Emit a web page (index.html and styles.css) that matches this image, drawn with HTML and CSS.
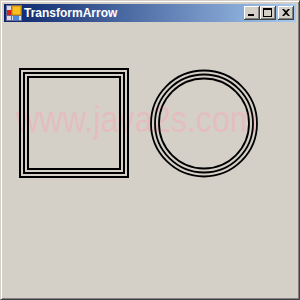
FILE: index.html
```html
<!DOCTYPE html>
<html lang="en">
<head>
    <meta charset="UTF-8"/>
    <title>TransformArrow</title>
    <link rel="stylesheet" href="styles.css">
</head>
<body>
<div class="window">
    <div class="titlebar">
        <svg class="app-icon" width="16" height="16" viewBox="0 0 16 16">
            <rect x="0.5" y="0.5" width="15" height="15" fill="#d8d8e8" stroke="#6b6b9a"/>
            <line x1="5.5" y1="0" x2="5.5" y2="16" stroke="#6b6b9a"/>
            <line x1="0" y1="10.5" x2="16" y2="10.5" stroke="#6b6b9a"/>
            <rect x="1" y="5" width="4" height="5" fill="#d02020"/>
            <rect x="6" y="1" width="9" height="9" fill="#f8c020" stroke="#c08000"/>
            <rect x="7" y="11" width="6" height="4" fill="#4a8ae0"/>
        </svg>
        <span class="title">TransformArrow</span>
        <div class="controls">
            <button class="ctl">
                <svg width="8" height="7" viewBox="0 0 8 7"><rect x="0" y="5" width="6" height="2" fill="#000"/></svg>
            </button>
            <button class="ctl">
                <svg width="9" height="9" viewBox="0 0 9 9"><rect x="0.5" y="0.5" width="8" height="8" fill="none" stroke="#000"/><rect x="0" y="0" width="9" height="2" fill="#000"/></svg>
            </button>
            <button class="ctl close">
                <svg width="8" height="7" viewBox="0 0 8 7"><path d="M0 0h2l2 2 2-2h2l-3 3.5 3 3.5h-2l-2-2-2 2h-2l3-3.5z" fill="#000"/></svg>
            </button>
        </div>
    </div>
    <div class="client">
        <svg class="canvas" width="292" height="273" viewBox="4 23 292 273">
            <text class="watermark" x="16" y="132" textLength="241" lengthAdjust="spacingAndGlyphs">www.java2s.com</text>
            <g fill="none" stroke="#000" stroke-width="2" shape-rendering="crispEdges">
                <rect x="20" y="69" width="108" height="108"/>
                <rect x="24" y="73" width="100" height="100"/>
                <rect x="28" y="77" width="92" height="92"/>
            </g>
            <g fill="none" stroke="#000" stroke-width="1.8">
                <circle cx="204" cy="123.5" r="53"/>
                <circle cx="204" cy="123.5" r="49"/>
                <circle cx="204" cy="123.5" r="45"/>
            </g>
        </svg>
    </div>
</div>
</body>
</html>
```

FILE: styles.css
```css
html, body {
    margin: 0;
    padding: 0;
}

body {
    width: 300px;
    height: 300px;
    overflow: hidden;
    background: #d4d0c8;
}

.window {
    box-sizing: border-box;
    width: 300px;
    height: 300px;
    display: flex;
    flex-direction: column;
    background: #d4d0c8;
    border-top: 1px solid #d4d0c8;
    border-left: 1px solid #d4d0c8;
    border-right: 1px solid #404040;
    border-bottom: 1px solid #404040;
    box-shadow: inset 1px 1px 0 #fff, inset -1px -1px 0 #808080;
    padding: 3px;
}

.titlebar {
    height: 18px;
    display: flex;
    align-items: center;
    padding-left: 2px;
    background: linear-gradient(to right, #0a246a, #a6caf0);
    color: #fff;
}

.app-icon {
    display: block;
    margin-right: 2px;
}

.title {
    font-family: "Liberation Sans", Arial, sans-serif;
    font-weight: bold;
    font-size: 12px;
    line-height: 18px;
    flex: 1;
}

.controls {
    display: flex;
    padding-right: 2px;
}

.ctl {
    box-sizing: border-box;
    width: 16px;
    height: 14px;
    padding: 0;
    margin: 0;
    display: flex;
    align-items: center;
    justify-content: center;
    background: #d4d0c8;
    border: none;
    border-right: 1px solid #404040;
    border-bottom: 1px solid #404040;
    box-shadow: inset 1px 1px 0 #fff, inset -1px -1px 0 #808080;
}

.ctl.close {
    margin-left: 2px;
}

.ctl svg {
    display: block;
}

.client {
    flex: 1;
    margin-top: 1px;
}

.canvas {
    display: block;
}

.watermark {
    font-family: "Liberation Sans", Arial, sans-serif;
    font-size: 37px;
    fill: #e4bebe;
}
```
